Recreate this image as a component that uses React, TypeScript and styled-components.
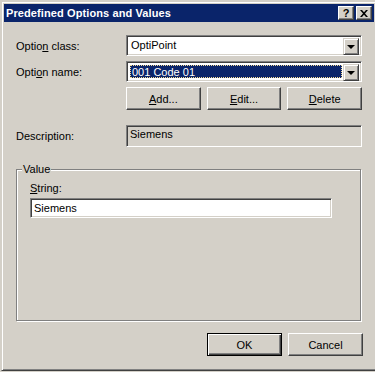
import React from 'react';
import styled, { createGlobalStyle } from 'styled-components';

const face = '#d4d0c8';
const navy = '#0a246a';

const GlobalStyle = createGlobalStyle`
  html, body {
    margin: 0;
    padding: 0;
    background: ${face};
    overflow: hidden;
  }
  body {
    font-family: "Liberation Sans", Arial, sans-serif;
    font-size: 11px;
    color: #000;
  }
`;

const Window = styled.div`
  box-sizing: border-box;
  margin: 1px 0 0 1px;
  width: 376px;
  height: 370px;
  background: ${face};
  border-top: 1px solid ${face};
  border-left: 1px solid ${face};
  border-right: 1px solid #404040;
  border-bottom: 1px solid #404040;
  box-shadow: inset 1px 1px 0 #fff, inset -1px -1px 0 #808080;
  padding: 2px;
  display: flex;
  flex-direction: column;
`;

const TitleBar = styled.div`
  height: 18px;
  background: ${navy};
  display: flex;
  align-items: center;
  padding: 0 2px;
`;

const Title = styled.div`
  flex: 1;
  color: #fff;
  font-weight: bold;
  font-size: 11px;
  letter-spacing: 0.1px;
`;

const CaptionButton = styled.div`
  box-sizing: border-box;
  width: 16px;
  height: 14px;
  margin-left: 2px;
  background: ${face};
  border-top: 1px solid #fff;
  border-left: 1px solid #fff;
  border-right: 1px solid #404040;
  border-bottom: 1px solid #404040;
  box-shadow: inset -1px -1px 0 #808080;
  display: flex;
  align-items: center;
  justify-content: center;
  font-weight: bold;
  font-size: 11px;
  line-height: 1;
`;

const Content = styled.div`
  padding: 13px 0 0 12px;
  width: 347px;
  display: flex;
  flex-direction: column;
`;

const FormGrid = styled.div<{ $gap?: number }>`
  display: grid;
  grid-template-columns: 110px 236px;
  row-gap: ${(p) => p.$gap ?? 5}px;
  align-items: center;
`;

const Label = styled.div`
  line-height: 13px;
  padding-top: 1px;
`;

const Sunken = styled.div<{ $h: number; $bg?: string }>`
  box-sizing: border-box;
  height: ${(p) => p.$h}px;
  background: ${(p) => p.$bg ?? '#fff'};
  border-top: 1px solid #808080;
  border-left: 1px solid #808080;
  border-right: 1px solid #fff;
  border-bottom: 1px solid #fff;
  box-shadow: inset 1px 1px 0 #404040, inset -1px -1px 0 ${face};
`;

const Combo = styled(Sunken)`
  display: flex;
  padding: 2px;
`;

const ComboText = styled.div<{ $selected?: boolean }>`
  flex: 1;
  box-sizing: border-box;
  margin: ${(p) => (p.$selected ? '1px' : '0')};
  padding-left: ${(p) => (p.$selected ? '1px' : '2px')};
  line-height: ${(p) => (p.$selected ? '13px' : '15px')};
  background: ${(p) => (p.$selected ? navy : 'transparent')};
  color: ${(p) => (p.$selected ? '#fff' : '#000')};
  border: ${(p) => (p.$selected ? '1px dotted #f5db95' : 'none')};
`;

const DropButton = styled.div`
  box-sizing: border-box;
  width: 16px;
  height: 17px;
  background: ${face};
  border-top: 1px solid ${face};
  border-left: 1px solid ${face};
  border-right: 1px solid #404040;
  border-bottom: 1px solid #404040;
  box-shadow: inset 1px 1px 0 #fff, inset -1px -1px 0 #808080;
  display: flex;
  align-items: center;
  justify-content: center;
`;

const Arrow = styled.div`
  width: 0;
  height: 0;
  border-left: 4px solid transparent;
  border-right: 4px solid transparent;
  border-top: 4px solid #000;
  margin-top: 1px;
`;

const ButtonRow = styled.div`
  display: flex;
  gap: 6px;
`;

const Button = styled.div<{ $default?: boolean }>`
  box-sizing: border-box;
  flex: 0 0 75px;
  height: 23px;
  background: ${face};
  border-top: 1px solid ${(p) => (p.$default ? '#000' : '#fff')};
  border-left: 1px solid ${(p) => (p.$default ? '#000' : '#fff')};
  border-right: 1px solid ${(p) => (p.$default ? '#000' : '#404040')};
  border-bottom: 1px solid ${(p) => (p.$default ? '#000' : '#404040')};
  box-shadow: ${(p) =>
    p.$default
      ? 'inset 1px 1px 0 #fff, inset -1px -1px 0 #404040, inset -2px -2px 0 #808080'
      : 'inset -1px -1px 0 #808080'};
  display: flex;
  align-items: center;
  justify-content: center;
`;

const RowButton = styled(Button)`
  flex: 1;
`;

const DescRow = styled(FormGrid)`
  margin-top: 15px;
`;

const ReadOnlyText = styled.div`
  padding: 2px 0 0 3px;
  line-height: 13px;
`;

const GroupBox = styled.div`
  position: relative;
  box-sizing: border-box;
  margin-top: 22px;
  width: 345px;
  height: 152px;
  border: 1px solid #808080;
  box-shadow: 1px 1px 0 #fff, inset 1px 1px 0 #fff;
  padding: 12px 0 0 13px;
`;

const Legend = styled.div`
  position: absolute;
  top: -7px;
  left: 5px;
  padding: 0 1px;
  background: ${face};
  line-height: 13px;
`;

const FieldLabel = styled.div`
  line-height: 13px;
  margin-bottom: 3px;
`;

const TextInput = styled(Sunken)`
  width: 302px;
  padding: 2px 0 0 3px;
  line-height: 14px;
`;

const Footer = styled.div`
  margin-top: 12px;
  display: flex;
  justify-content: flex-end;
  gap: 6px;
`;

const ComboBox = ({ value, selected }: { value: string; selected?: boolean }) => (
  <Combo $h={21}>
    <ComboText $selected={selected}>{value}</ComboText>
    <DropButton>
      <Arrow />
    </DropButton>
  </Combo>
);

export default function App() {
  return (
    <>
      <GlobalStyle />
      <Window>
        <TitleBar>
          <Title>Predefined Options and Values</Title>
          <CaptionButton>?</CaptionButton>
          <CaptionButton>
            <svg width="8" height="7" viewBox="0 0 8 7">
              <path d="M0 0h2l2 2.2L6 0h2L5 3.5 8 7H6L4 4.8 2 7H0l3-3.5z" fill="#000" />
            </svg>
          </CaptionButton>
        </TitleBar>
        <Content>
          <FormGrid>
            <Label>
              Optio<u>n</u> class:
            </Label>
            <ComboBox value="OptiPoint" />
            <Label>
              Opti<u>o</u>n name:
            </Label>
            <ComboBox value="001 Code 01" selected />
            <div />
            <ButtonRow>
              <RowButton>
                <span>
                  <u>A</u>dd...
                </span>
              </RowButton>
              <RowButton>
                <span>
                  <u>E</u>dit...
                </span>
              </RowButton>
              <RowButton>
                <span>
                  <u>D</u>elete
                </span>
              </RowButton>
            </ButtonRow>
          </FormGrid>
          <DescRow>
            <Label>Description:</Label>
            <Sunken $h={22} $bg={face}>
              <ReadOnlyText>Siemens</ReadOnlyText>
            </Sunken>
          </DescRow>
          <GroupBox>
            <Legend>Value</Legend>
            <FieldLabel>
              <u>S</u>tring:
            </FieldLabel>
            <TextInput $h={20}>Siemens</TextInput>
          </GroupBox>
          <Footer>
            <Button $default>OK</Button>
            <Button>Cancel</Button>
          </Footer>
        </Content>
      </Window>
    </>
  );
}
